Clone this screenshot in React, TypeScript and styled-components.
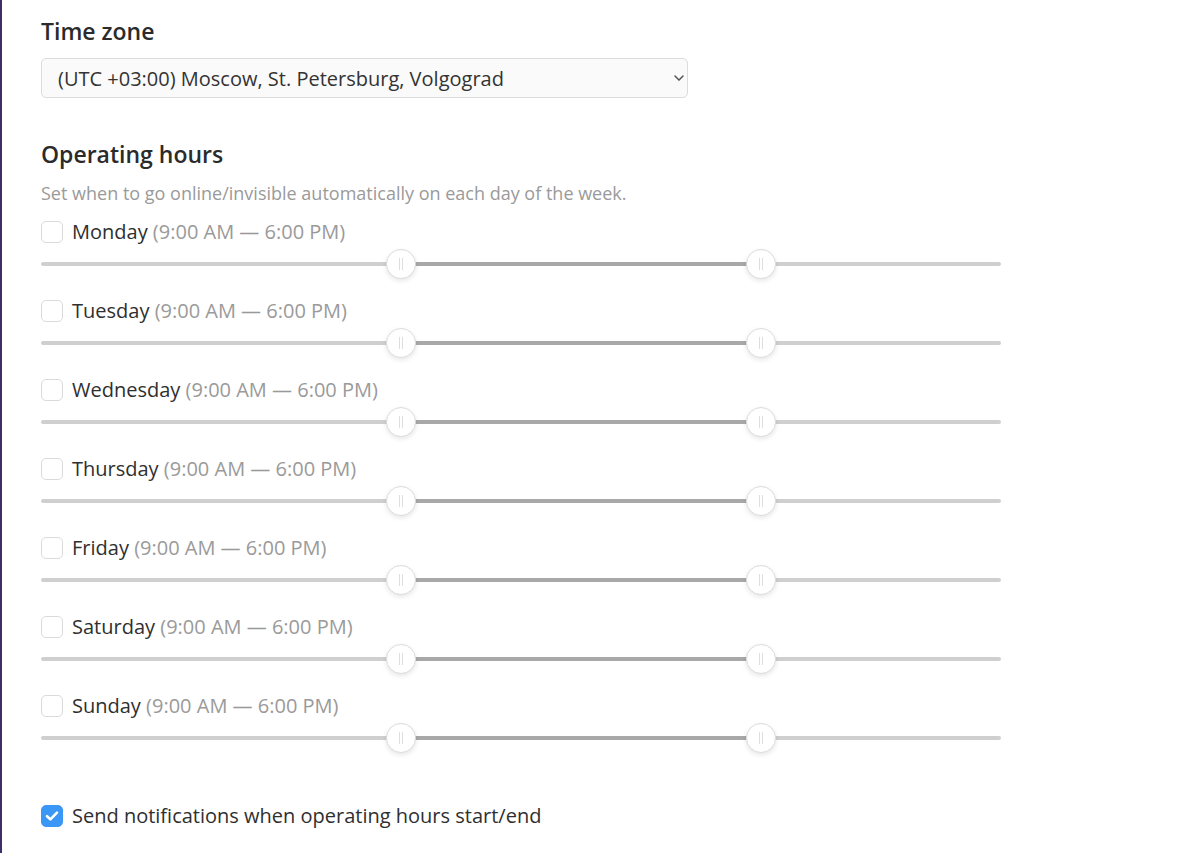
import styled, {createGlobalStyle} from 'styled-components';
import React, {FC, useState} from 'react';

const GlobalStyle = createGlobalStyle`
  html, body {
    margin: 0;
    padding: 0;
    background: #fff;
    font-family: 'Open Sans', 'Noto Sans', sans-serif;
    color: #333;
  }
`;

type Day = {
  name: string;
  start: number;
  end: number;
};

const DAYS: Day[] = [
  {name: 'Monday', start: 9, end: 18},
  {name: 'Tuesday', start: 9, end: 18},
  {name: 'Wednesday', start: 9, end: 18},
  {name: 'Thursday', start: 9, end: 18},
  {name: 'Friday', start: 9, end: 18},
  {name: 'Saturday', start: 9, end: 18},
  {name: 'Sunday', start: 9, end: 18},
];

const formatHour = (h: number) => {
  const suffix = h >= 12 ? 'PM' : 'AM';
  const hh = h % 12 === 0 ? 12 : h % 12;
  return `${hh}:00 ${suffix}`;
};

const Check: FC<{checked: boolean; onToggle: () => void}> = ({checked, onToggle}) => (
  <CheckBox checked={checked} onClick={onToggle}>
    {checked && (
      <svg width="16" height="16" viewBox="0 0 16 16">
        <path d="M3 8.2 L6.4 11.4 L13 4.6" fill="none" stroke="#fff" strokeWidth="2.6" strokeLinecap="round" strokeLinejoin="round" />
      </svg>
    )}
  </CheckBox>
);

const RangeSlider: FC<{start: number; end: number}> = ({start, end}) => {
  const a = (start / 24) * 100;
  const b = (end / 24) * 100;
  return (
    <SliderArea>
      <Track>
        <Fill style={{left: `${a}%`, width: `${b - a}%`}} />
        <Handle style={{left: `${a}%`}}>
          <Grip />
        </Handle>
        <Handle style={{left: `${b}%`}}>
          <Grip />
        </Handle>
      </Track>
    </SliderArea>
  );
};

export default function App() {
  const [checked, setChecked] = useState<boolean[]>(DAYS.map(() => false));
  const [notify, setNotify] = useState(true);

  return (
    <Page>
      <GlobalStyle />
      <Content>
        <Heading>Time zone</Heading>
        <SelectWrap>
          <Select defaultValue="msk">
            <option value="msk">(UTC +03:00) Moscow, St. Petersburg, Volgograd</option>
          </Select>
          <Chevron width="10" height="6" viewBox="0 0 10 6">
            <path d="M1 1 L5 5 L9 1" fill="none" stroke="#555" strokeWidth="1.5" strokeLinecap="round" />
          </Chevron>
        </SelectWrap>

        <Heading spaced>Operating hours</Heading>
        <Description>Set when to go online/invisible automatically on each day of the week.</Description>

        {DAYS.map((d, i) => (
          <DayBlock key={d.name}>
            <LabelRow>
              <Check
                checked={checked[i]}
                onToggle={() => setChecked((s) => s.map((v, j) => (j === i ? !v : v)))}
              />
              <DayName>
                {d.name} <Range>({formatHour(d.start)} — {formatHour(d.end)})</Range>
              </DayName>
            </LabelRow>
            <RangeSlider start={d.start} end={d.end} />
          </DayBlock>
        ))}

        <NotifyRow>
          <Check checked={notify} onToggle={() => setNotify(!notify)} />
          <DayName>Send notifications when operating hours start/end</DayName>
        </NotifyRow>
      </Content>
    </Page>
  );
}

const Page = styled.div`
  min-height: 853px;
  border-left: 2px solid #3d2d68;
  box-sizing: border-box;
`;

const Content = styled.div`
  padding: 16px 0 0 39px;
  width: 960px;
`;

const Heading = styled.h2<{spaced?: boolean}>`
  margin: ${(p) => (p.spaced ? '41px' : '0')} 0 0;
  font-size: 23px;
  line-height: 30px;
  font-weight: 600;
  color: #2b2b2b;
`;

const SelectWrap = styled.div`
  position: relative;
  margin-top: 12px;
  width: 647px;
`;

const Select = styled.select`
  appearance: none;
  width: 100%;
  height: 40px;
  padding: 0 30px 0 16px;
  box-sizing: border-box;
  background: #fafafa;
  border: 1px solid #dcdcdc;
  border-radius: 5px;
  font-family: 'Open Sans', 'Noto Sans', sans-serif;
  font-size: 20px;
  color: #333;
  outline: none;
`;

const Chevron = styled.svg`
  position: absolute;
  right: 4px;
  top: 17px;
  pointer-events: none;
`;

const Description = styled.p`
  margin: 12px 0 0;
  font-size: 18px;
  line-height: 24px;
  color: #9a9a9a;
`;

const DayBlock = styled.div`
  margin-top: 15px;
  &:first-of-type {
    margin-top: 16px;
  }
`;

const LabelRow = styled.div`
  display: flex;
  align-items: center;
  gap: 9px;
  height: 24px;
`;

const CheckBox = styled.span<{checked: boolean}>`
  display: flex;
  align-items: center;
  justify-content: center;
  width: 22px;
  height: 22px;
  box-sizing: border-box;
  border-radius: 5px;
  border: 1px solid ${(p) => (p.checked ? '#3b97f6' : '#dadada')};
  background: ${(p) => (p.checked ? '#3b97f6' : '#fff')};
  cursor: pointer;
  flex-shrink: 0;
`;

const DayName = styled.span`
  font-size: 20px;
  line-height: 24px;
  color: #2f2f2f;
`;

const Range = styled.span`
  color: #9a9a9a;
`;

const SliderArea = styled.div`
  height: 40px;
  display: flex;
  align-items: center;
`;

const Track = styled.div`
  position: relative;
  width: 100%;
  height: 4px;
  border-radius: 2px;
  background: #cfcfcf;
`;

const Fill = styled.div`
  position: absolute;
  top: 0;
  height: 100%;
  background: #a8a8a8;
`;

const Handle = styled.div`
  position: absolute;
  top: 50%;
  width: 28px;
  height: 28px;
  margin: -15px 0 0 -15px;
  border-radius: 50%;
  background: #fff;
  border: 1px solid #dcdcdc;
  box-shadow: 0 2px 5px rgba(0, 0, 0, 0.1);
  display: flex;
  align-items: center;
  justify-content: center;
`;

const Grip = styled.span`
  width: 4px;
  height: 12px;
  border-left: 1px solid #dedede;
  border-right: 1px solid #dedede;
  box-sizing: border-box;
`;

const NotifyRow = styled.div`
  display: flex;
  align-items: center;
  gap: 9px;
  height: 24px;
  margin-top: 46px;
`;
